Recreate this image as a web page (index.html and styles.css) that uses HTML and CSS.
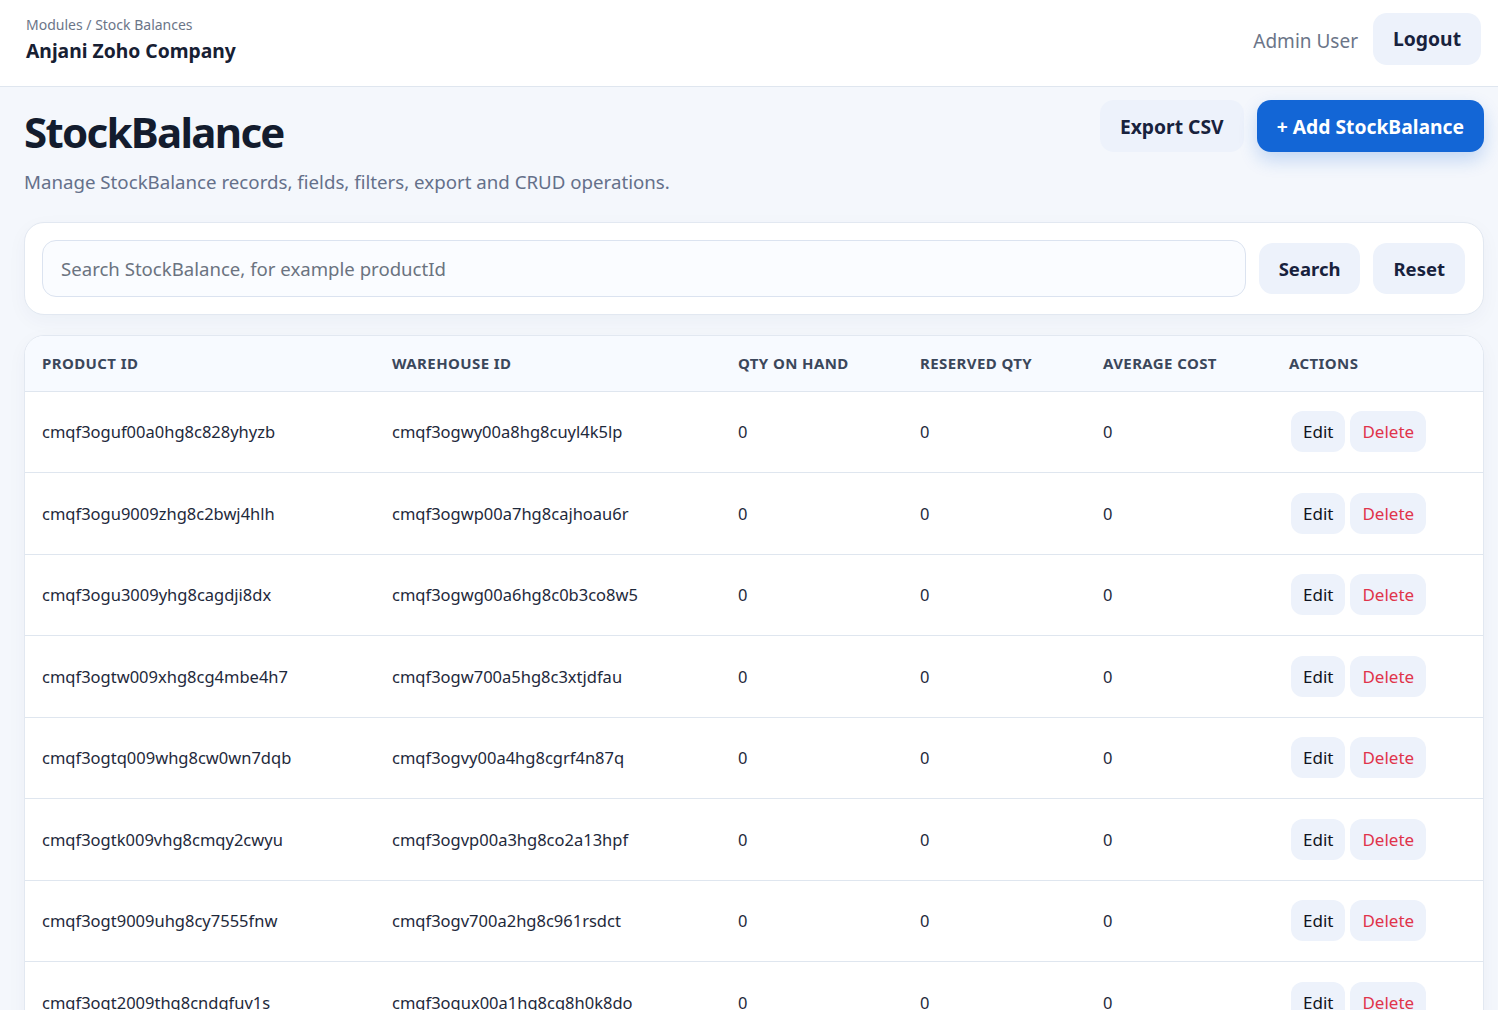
FILE: index.html
```html
<!DOCTYPE html>
<html lang="en">
<head>
<meta charset="utf-8">
<title>StockBalance</title>
<link rel="stylesheet" href="styles.css">
</head>
<body>
<header class="topbar">
  <div class="brand">
    <div class="crumb">Modules / Stock Balances</div>
    <div class="company">Anjani Zoho Company</div>
  </div>
  <div class="user">
    <span class="user-name">Admin User</span>
    <button class="btn btn-soft btn-lg">Logout</button>
  </div>
</header>
<main class="main">
  <section class="page-head">
    <div>
      <h1 class="title">StockBalance</h1>
      <p class="subtitle">Manage StockBalance records, fields, filters, export and CRUD operations.</p>
    </div>
    <div class="head-actions">
      <button class="btn btn-soft btn-lg">Export CSV</button>
      <button class="btn btn-primary btn-lg">+ Add StockBalance</button>
    </div>
  </section>
  <section class="card search-card">
    <input class="search-input" type="text" placeholder="Search StockBalance, for example productId">
    <button class="btn btn-soft btn-md">Search</button>
    <button class="btn btn-soft btn-md">Reset</button>
  </section>
  <section class="card table-card">
    <table class="grid">
      <colgroup>
        <col class="c1"><col class="c2"><col class="c3"><col class="c4"><col class="c5"><col class="c6">
      </colgroup>
      <thead>
        <tr><th>Product ID</th><th>Warehouse ID</th><th>Qty On Hand</th><th>Reserved Qty</th><th>Average Cost</th><th>Actions</th></tr>
      </thead>
      <tbody>
        <tr><td>cmqf3oguf00a0hg8c828yhyzb</td><td>cmqf3ogwy00a8hg8cuyl4k5lp</td><td>0</td><td>0</td><td>0</td><td><div class="acts"><button class="btn-row">Edit</button><button class="btn-row danger">Delete</button></div></td></tr>
        <tr><td>cmqf3ogu9009zhg8c2bwj4hlh</td><td>cmqf3ogwp00a7hg8cajhoau6r</td><td>0</td><td>0</td><td>0</td><td><div class="acts"><button class="btn-row">Edit</button><button class="btn-row danger">Delete</button></div></td></tr>
        <tr><td>cmqf3ogu3009yhg8cagdji8dx</td><td>cmqf3ogwg00a6hg8c0b3co8w5</td><td>0</td><td>0</td><td>0</td><td><div class="acts"><button class="btn-row">Edit</button><button class="btn-row danger">Delete</button></div></td></tr>
        <tr><td>cmqf3ogtw009xhg8cg4mbe4h7</td><td>cmqf3ogw700a5hg8c3xtjdfau</td><td>0</td><td>0</td><td>0</td><td><div class="acts"><button class="btn-row">Edit</button><button class="btn-row danger">Delete</button></div></td></tr>
        <tr><td>cmqf3ogtq009whg8cw0wn7dqb</td><td>cmqf3ogvy00a4hg8cgrf4n87q</td><td>0</td><td>0</td><td>0</td><td><div class="acts"><button class="btn-row">Edit</button><button class="btn-row danger">Delete</button></div></td></tr>
        <tr><td>cmqf3ogtk009vhg8cmqy2cwyu</td><td>cmqf3ogvp00a3hg8co2a13hpf</td><td>0</td><td>0</td><td>0</td><td><div class="acts"><button class="btn-row">Edit</button><button class="btn-row danger">Delete</button></div></td></tr>
        <tr><td>cmqf3ogt9009uhg8cy7555fnw</td><td>cmqf3ogv700a2hg8c961rsdct</td><td>0</td><td>0</td><td>0</td><td><div class="acts"><button class="btn-row">Edit</button><button class="btn-row danger">Delete</button></div></td></tr>
        <tr><td>cmqf3ogt2009thg8cndqfuv1s</td><td>cmqf3ogux00a1hg8cq8h0k8do</td><td>0</td><td>0</td><td>0</td><td><div class="acts"><button class="btn-row">Edit</button><button class="btn-row danger">Delete</button></div></td></tr>
      </tbody>
    </table>
  </section>
</main>
</body>
</html>
```
FILE: styles.css
```css
* { box-sizing: border-box; }
html, body { margin: 0; padding: 0; }
body {
  font-family: "Noto Sans", "Open Sans", sans-serif;
  color: #1e293b;
  background: #f4f7fc;
  overflow: hidden;
}
button { font-family: inherit; cursor: pointer; }

.topbar {
  height: 87px;
  background: #ffffff;
  border-bottom: 1px solid #dfe6ef;
  display: flex;
  align-items: center;
  justify-content: space-between;
  padding: 0 17px 0 26px;
}
.brand { display: flex; flex-direction: column; gap: 4px; margin-top: -6px; }
.crumb { font-size: 14px; color: #6b7588; line-height: 18px; }
.company { font-size: 19.3px; font-weight: 700; color: #172033; line-height: 26px; }
.user { display: flex; align-items: center; gap: 15px; margin-top: -9px; }
.user-name { font-size: 19px; color: #6b7588; padding-top: 5px; }

.btn {
  border: none;
  border-radius: 14px;
  font-weight: 700;
  font-size: 19.3px;
  color: #18223d;
  display: inline-flex;
  align-items: center;
  justify-content: center;
}
.btn-soft { background: #edf2fb; }
.btn-lg { height: 52px; padding: 0 20px; }
.btn-md { height: 51px; padding: 0 20px; font-size: 18.5px; }
.btn-primary {
  background: #1366d6;
  color: #ffffff;
  box-shadow: 0 8px 18px rgba(19, 102, 214, 0.22);
}

.main { padding: 13px 14px 0 24px; }
.page-head {
  display: flex;
  justify-content: space-between;
  align-items: flex-start;
}
.title {
  margin: 6px 0 0;
  font-size: 42px;
  font-weight: 700;
  letter-spacing: -1.7px;
  line-height: 52px;
  color: #131c2e;
}
.subtitle {
  margin: 12px 0 0;
  font-size: 18.7px;
  color: #64708a;
  line-height: 24px;
}
.head-actions { display: flex; gap: 13px; }

.card {
  background: #ffffff;
  border: 1px solid #e2e8f1;
  border-radius: 20px;
  box-shadow: 0 6px 20px rgba(30, 50, 90, 0.04);
}
.search-card {
  margin-top: 28px;
  padding: 17px 18px 17px 17px;
  display: flex;
  align-items: center;
  gap: 13px;
}
.search-input {
  flex: 1;
  height: 57px;
  border: 1px solid #dbe3f0;
  border-radius: 14px;
  background: #fafcff;
  font-family: inherit;
  font-size: 18.6px;
  padding: 0 18px;
  color: #1e293b;
  outline: none;
}
.search-input::placeholder { color: #6b7380; }

.table-card {
  margin-top: 20px;
  overflow: hidden;
}
.grid {
  width: 100%;
  border-collapse: collapse;
  table-layout: fixed;
}
.c1 { width: 350px; }
.c2 { width: 346px; }
.c3 { width: 182px; }
.c4 { width: 183px; }
.c5 { width: 186px; }
.c6 { width: auto; }
.grid th {
  height: 55px;
  background: #f7faff;
  text-align: left;
  text-transform: uppercase;
  font-size: 15px;
  font-weight: 700;
  letter-spacing: 0.4px;
  color: #3b475b;
  padding: 0 17px;
  border-bottom: 1px solid #dfe6ef;
}
.grid td {
  height: 81.5px;
  padding: 0 17px;
  font-size: 16.5px;
  color: #1e293b;
  border-bottom: 1px solid #dfe6ef;
  white-space: nowrap;
}
.grid td:last-child { padding-left: 19px; }
.acts { display: flex; gap: 5px; }
.btn-row {
  height: 41px;
  border: none;
  border-radius: 12px;
  background: #edf2fb;
  font-size: 17px;
  color: #0f1420;
  padding: 0 12px;
}
.btn-row.danger { color: #e0344b; }
```
